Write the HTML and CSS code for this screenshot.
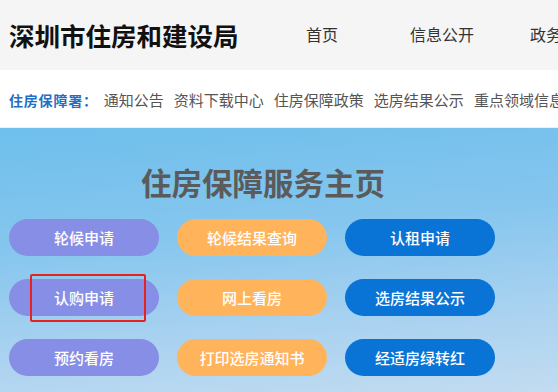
FILE: index.html
```html
<!DOCTYPE html>
<html lang="zh-CN">
<head>
<meta charset="utf-8">
<title>深圳市住房和建设局</title>
<link rel="stylesheet" href="styles.css">
</head>
<body>
<header class="top">
  <div class="logo">深圳市住房和建设局</div>
  <nav class="nav">
    <a class="nav-item">首页</a>
    <a class="nav-item">信息公开</a>
    <a class="nav-item">政务服务</a>
  </nav>
</header>
<div class="subnav">
  <span class="sub-label">住房保障署：</span>
  <a class="sub-item">通知公告</a>
  <a class="sub-item">资料下载中心</a>
  <a class="sub-item">住房保障政策</a>
  <a class="sub-item">选房结果公示</a>
  <a class="sub-item">重点领域信息公开</a>
</div>
<main class="hero">
  <h1 class="hero-title">住房保障服务主页</h1>
  <div class="grid">
    <a class="btn purple">轮候申请</a>
    <a class="btn orange">轮候结果查询</a>
    <a class="btn blue">认租申请</a>
    <a class="btn purple marked">认购申请<span class="mark"></span></a>
    <a class="btn orange">网上看房</a>
    <a class="btn blue">选房结果公示</a>
    <a class="btn purple">预约看房</a>
    <a class="btn orange">打印选房通知书</a>
    <a class="btn blue">经适房绿转红</a>
  </div>
</main>
</body>
</html>
```
FILE: styles.css
```css
* { box-sizing: border-box; }
html, body {
  margin: 0;
  padding: 0;
  width: 558px;
  height: 392px;
  overflow: hidden;
  font-family: "Noto Sans CJK SC", "Noto Sans", sans-serif;
}
a { text-decoration: none; cursor: pointer; }

.top {
  height: 70px;
  background: #f5f5f5;
  display: flex;
  align-items: center;
  white-space: nowrap;
}
.logo {
  padding-left: 9px;
  font-size: 25.5px;
  font-weight: 700;
  color: #111;
  width: 262px;
  flex: none;
  margin-top: -2px;
}
.nav {
  display: flex;
  flex: none;
}
.nav-item {
  width: 120px;
  text-align: center;
  font-size: 16px;
  color: #333;
  margin-top: -2px;
}

.subnav {
  height: 58px;
  background: #fff;
  display: flex;
  align-items: center;
  padding-left: 9px;
  padding-top: 2px;
  white-space: nowrap;
  gap: 10px;
  border-bottom: 1px solid #e6f1f8;
}
.sub-label {
  font-size: 14px;
  font-weight: 700;
  color: #1f6fc4;
  letter-spacing: 0.8px;
  margin-right: -4px;
}
.sub-item {
  font-size: 15px;
  color: #555;
}

.hero {
  height: 264px;
  background: linear-gradient(175deg, #6ebfec 0%, #86c6ee 40%, #a7d1f0 70%, #c2dcf1 100%);
  padding-top: 34px;
}
.hero-title {
  margin: 0 0 17px 0;
  text-align: center;
  font-size: 30.5px;
  line-height: 40px;
  font-weight: 700;
  color: #5b5b5b;
  padding-right: 32px;
}
.grid {
  display: grid;
  grid-template-columns: repeat(3, 150px);
  grid-auto-rows: 37px;
  column-gap: 18px;
  row-gap: 23px;
  padding-left: 9px;
}
.btn {
  border-radius: 19px;
  display: flex;
  align-items: center;
  justify-content: center;
  color: #fff;
  font-size: 15px;
  font-weight: 500;
  position: relative;
}
.purple { background: #878ee5; }
.orange { background: #ffb35a; }
.blue { background: #0a73d6; }
.marked .mark {
  position: absolute;
  left: 21px;
  top: -5px;
  width: 116px;
  height: 48px;
  border: 2.5px solid #e52222;
  border-radius: 2px;
}
```
